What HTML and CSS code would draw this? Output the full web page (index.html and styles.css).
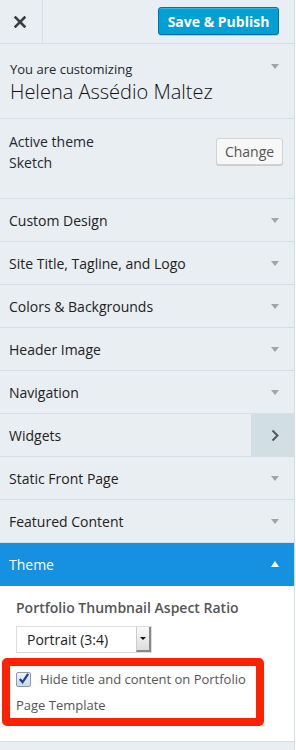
FILE: index.html
```html
<html lang="en">
<head>
  <meta charset="UTF-8" />
  <meta name="viewport" content="width=device-width, initial-scale=1.0" />
  <title>Customize</title>
  <link rel="stylesheet" href="styles.css">
</head>
<body>
  <div class="panel">

    <!-- Top bar -->
    <div class="topbar">
      <button class="close" aria-label="Close">
        <svg width="12" height="12" viewBox="0 0 12 12"><path d="M1.5 1.5 L10.5 10.5 M10.5 1.5 L1.5 10.5" stroke="#3a3f44" stroke-width="2.6" stroke-linecap="square"/></svg>
      </button>
      <button class="publish">Save &amp; Publish</button>
    </div>

    <!-- Site info -->
    <div class="info">
      <div>
        <div class="info-label">You are customizing</div>
        <div class="info-title">Helena Assédio Maltez</div>
      </div>
      <span class="arrow-down info-arrow"></span>
    </div>

    <!-- Theme info -->
    <div class="theme-info">
      <div class="theme-text">
        <div>Active theme</div>
        <div>Sketch</div>
      </div>
      <button class="change">Change</button>
    </div>

    <ul class="sections">
      <li class="section"><span>Custom Design</span><span class="icon"><span class="arrow-down"></span></span></li>
      <li class="section"><span>Site Title, Tagline, and Logo</span><span class="icon"><span class="arrow-down"></span></span></li>
      <li class="section"><span>Colors &amp; Backgrounds</span><span class="icon"><span class="arrow-down"></span></span></li>
      <li class="section"><span>Header Image</span><span class="icon"><span class="arrow-down"></span></span></li>
      <li class="section"><span>Navigation</span><span class="icon"><span class="arrow-down"></span></span></li>
      <li class="section widgets"><span>Widgets</span><span class="icon"><svg width="8" height="13" viewBox="0 0 8 13"><path d="M1.5 1.5 L6.5 6.5 L1.5 11.5" fill="none" stroke="#50575e" stroke-width="2"/></svg></span></li>
      <li class="section"><span>Static Front Page</span><span class="icon"><span class="arrow-down"></span></span></li>
      <li class="section"><span>Featured Content</span><span class="icon"><span class="arrow-down"></span></span></li>
      <li class="section open"><span>Theme</span><span class="icon"><span class="arrow-up"></span></span></li>
    </ul>

    <!-- Open section -->
    <div class="section-body">
      <div class="control-title">Portfolio Thumbnail Aspect Ratio</div>
      <div class="select">
        <span>Portrait (3:4)</span>
        <span class="select-btn"><span class="select-arrow"></span></span>
      </div>
      <div class="highlight">
        <label class="check-label">
          <span class="checkbox">
            <svg width="14" height="14" viewBox="0 0 14 14"><path d="M3 7 L6 10.5 L12 1.5" fill="none" stroke="#1b3f8f" stroke-width="2.4"/></svg>
          </span>Hide title and content on Portfolio Page Template
        </label>
      </div>
    </div>

  </div>
</body>
</html>
```

FILE: styles.css
```css
* {
  margin: 0;
  padding: 0;
  box-sizing: border-box;
}

body {
  background: #fff;
  font-family: "Open Sans", sans-serif;
  color: #23282d;
}

.panel {
  width: 295px;
  min-height: 100vh;
  background: #e9eef2;
  border-right: 1px solid #d6dee3;
}

/* Top bar */
.topbar {
  display: flex;
  justify-content: space-between;
  align-items: center;
  height: 44px;
  border-bottom: 1px solid #d6dee3;
}

.close {
  width: 43px;
  height: 43px;
  border: 0;
  border-right: 1px solid #d6dee3;
  background: none;
  display: flex;
  align-items: center;
  justify-content: center;
  padding-right: 3px;
}

.publish {
  margin: -1px 15px 0 0;
  width: 121px;
  height: 28px;
  border: 1px solid #0073aa;
  border-radius: 3px;
  background: #00a0d2;
  color: #fff;
  font-family: "Open Sans", sans-serif;
  font-size: 14px;
  font-weight: 700;
  box-shadow: inset 0 1px 0 rgba(120, 200, 230, 0.5), 0 1px 0 rgba(0, 0, 0, 0.15);
}

/* Site info */
.info {
  display: flex;
  justify-content: space-between;
  align-items: flex-start;
  padding: 15px 15px 13px 10px;
  border-bottom: 1px solid #d6dee3;
}

.info-label {
  font-size: 13px;
  line-height: 20px;
}

.info-title {
  font-size: 20px;
  line-height: 26px;
  font-weight: 300;
  color: #111;
}

.info-arrow {
  margin-top: 5px;
}

/* Theme info */
.theme-info {
  display: flex;
  justify-content: space-between;
  align-items: flex-start;
  padding: 12px 11px 25px 9px;
  border-bottom: 1px solid #d6dee3;
}

.theme-text {
  font-size: 14px;
  line-height: 21px;
}

.change {
  margin-top: 7px;
  width: 67px;
  height: 27px;
  border: 1px solid #cfd4d8;
  border-radius: 3px;
  background: #f7f7f7;
  color: #555;
  font-family: "Open Sans", sans-serif;
  font-size: 14px;
  box-shadow: 0 1px 0 #ccc;
}

/* Section list */
.sections {
  list-style: none;
}

.section {
  display: flex;
  align-items: center;
  justify-content: space-between;
  height: 43px;
  padding-left: 9px;
  border-bottom: 1px solid #d6dee3;
  font-size: 14px;
  color: #222;
}

.section .icon {
  width: 43px;
  height: 42px;
  padding-left: 4px;
  display: flex;
  align-items: center;
  justify-content: center;
}

.widgets .icon {
  background: #d1dee3;
}

.section.open {
  background: #1690e0;
  border-bottom-color: #1690e0;
  color: #fff;
}

.arrow-down {
  display: block;
  width: 0;
  height: 0;
  border-left: 4px solid transparent;
  border-right: 4px solid transparent;
  border-top: 5px solid #a0a5aa;
}

.arrow-up {
  display: block;
  width: 0;
  height: 0;
  border-left: 4px solid transparent;
  border-right: 4px solid transparent;
  border-bottom: 6px solid #fff;
}

/* Open section body */
.section-body {
  background: #fff;
  padding: 12px 16px 15px;
  border-bottom: 1px solid #d6dee3;
}

.control-title {
  font-size: 14px;
  line-height: 20px;
  font-weight: 600;
  color: #555;
}

.select {
  display: flex;
  align-items: center;
  justify-content: space-between;
  margin-top: 8px;
  width: 136px;
  height: 27px;
  border: 1px solid #ddd;
  padding-left: 10px;
  font-size: 14px;
  color: #222;
}

.select-btn {
  width: 15px;
  height: 25px;
  display: flex;
  align-items: center;
  justify-content: center;
  background: linear-gradient(#fafafa, #dcdcdc);
  border-left: 1px solid #ccc;
  border-right: 2px solid #888;
  border-bottom: 2px solid #888;
}

.select-arrow {
  width: 0;
  height: 0;
  border-left: 3px solid transparent;
  border-right: 3px solid transparent;
  border-top: 3px solid #111;
}

.highlight {
  margin: 5px 0 0 -14px;
  width: 262px;
  border: 8px solid #ff2200;
  border-radius: 5px;
  padding-left: 6px;
}

.check-label {
  display: block;
  font-size: 13px;
  line-height: 26px;
  color: #555;
}

.checkbox {
  display: inline-flex;
  align-items: center;
  justify-content: center;
  width: 15px;
  height: 15px;
  margin-right: 9px;
  vertical-align: -2px;
  border: 1px solid #8d99b0;
  border-radius: 2px;
  background: linear-gradient(#eef3fb, #c9d6ea);
}
```
